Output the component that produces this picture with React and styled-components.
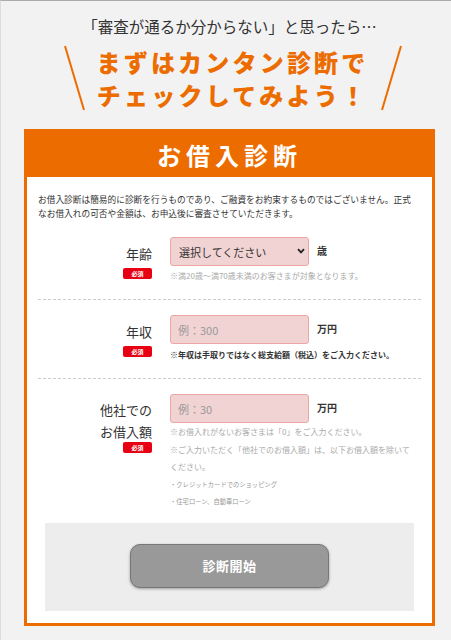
import React from "react";
import styled, { createGlobalStyle } from "styled-components";

const Global = createGlobalStyle`
  html, body { margin: 0; padding: 0; }
  body {
    background: #f2f2f2;
    font-family: "Noto Sans CJK JP", "Noto Sans", sans-serif;
    color: #333;
  }
  * { box-sizing: border-box; }
`;

const Page = styled.div`
  min-height: 640px;
  border-top: 1px solid #aaa;
  border-left: 1px solid #ddd;
  padding: 0 16px 14px 23px;
`;

const Hero = styled.div`
  display: flex;
  flex-direction: column;
  align-items: center;
  padding-top: 14px;
  height: 128px;
`;

const Lead = styled.div`
  font-size: 15.5px;
  line-height: 22px;
  color: #333;
`;

const CatchRow = styled.div`
  display: flex;
  align-items: center;
  justify-content: center;
  gap: 11px;
  margin-top: 8px;
  padding-left: 6px;
`;

const Slash = styled.svg`
  width: 24px;
  height: 66px;
  flex: none;
`;

const Catch = styled.div`
  font-size: 24px;
  line-height: 33px;
  font-weight: 900;
  color: #ec6c00;
  text-align: center;
  letter-spacing: 3.2px;
`;

const Card = styled.section`
  border: 3px solid #ec6c00;
  background: #fff;
`;

const CardHead = styled.h2`
  margin: 0;
  background: #ec6c00;
  color: #fff;
  height: 45px;
  display: flex;
  align-items: center;
  justify-content: center;
  font-size: 24px;
  font-weight: 700;
  letter-spacing: 5px;
`;

const CardBody = styled.div`
  padding: 16px 11px 12px 11px;
`;

const Intro = styled.p`
  margin: 0 0 1px;
  padding-right: 6px;
  font-size: 8.7px;
  line-height: 14px;
  color: #333;
`;

const Row = styled.div`
  display: grid;
  grid-template-columns: 114px 1fr;
  column-gap: 18px;
  padding: 15px 0 ${(p) => p.$pb || 16}px;
  border-bottom: ${(p) => (p.$last ? "none" : "1px dashed #ccc")};
`;

const LabelCol = styled.div`
  display: flex;
  flex-direction: column;
  align-items: flex-end;
  padding-top: ${(p) => p.$pt || 6}px;
`;

const Label = styled.div`
  font-size: 13px;
  line-height: 22px;
  text-align: right;
  color: #333;
`;

const Badge = styled.span`
  display: inline-flex;
  align-items: center;
  justify-content: center;
  width: 29px;
  height: 11px;
  border-radius: 2px;
  background: #e60012;
  color: #fff;
  font-size: 6px;
  font-weight: 700;
  margin-top: ${(p) => p.$mt ?? 4}px;
`;

const FieldCol = styled.div`
  display: flex;
  flex-direction: column;
`;

const FieldLine = styled.div`
  display: flex;
  align-items: center;
  gap: 8px;
`;

const SelectWrap = styled.div`
  position: relative;
  width: 139px;
  height: 29px;
`;

const Select = styled.select`
  appearance: none;
  width: 100%;
  height: 100%;
  background: #f2d3d3;
  border: 1px solid #f0a5a5;
  border-radius: 3px;
  font-family: inherit;
  font-size: 11px;
  color: #333;
  padding: 0 20px 0 8px;
  outline: none;
`;

const Chevron = styled.svg`
  position: absolute;
  right: 4px;
  top: 11px;
  width: 8px;
  height: 6px;
  pointer-events: none;
`;

const Input = styled.input`
  width: 139px;
  height: 29px;
  background: #f2d3d3;
  border: 1px solid #f0a5a5;
  border-radius: 3px;
  font-family: inherit;
  font-size: 11px;
  color: #333;
  padding: 0 7px;
  outline: none;
  &::placeholder { color: #999; }
`;

const Unit = styled.span`
  font-size: 10px;
  font-weight: 700;
  line-height: 20px;
  color: #333;
  margin-top: -1px;
`;

const Note = styled.p`
  margin: 0;
  font-size: 8px;
  line-height: ${(p) => p.$lh || 17.5}px;
  color: ${(p) => (p.$strong ? "#333" : "#aaa")};
  font-weight: ${(p) => (p.$strong ? 700 : 400)};
  margin-top: ${(p) => p.$mt || 0}px;
  padding-right: 6px;
`;

const Bullet = styled.p`
  margin: 0;
  font-size: 6.3px;
  line-height: 17px;
  color: #999;
`;

const ActionBox = styled.div`
  background: #ededed;
  margin: 0 7px;
  padding: 21px 0 23px;
  display: flex;
  justify-content: center;
`;

const Submit = styled.button`
  width: 199px;
  height: 44px;
  border-radius: 10px;
  background: #999;
  border: 1px solid #777;
  box-shadow: 0 1px 3px rgba(0, 0, 0, 0.35);
  color: #fff;
  font-family: inherit;
  font-size: 13px;
  font-weight: 700;
  letter-spacing: 0.5px;
`;

export default function App() {
  return (
    <>
      <Global />
      <Page>
        <Hero>
          <Lead>「審査が通るか分からない」と思ったら…</Lead>
          <CatchRow>
            <Slash viewBox="0 0 24 66">
              <line x1="3" y1="1" x2="22" y2="65" stroke="#ec6c00" strokeWidth="2" />
            </Slash>
            <Catch>
              まずはカンタン診断で
              <br />
              チェックしてみよう！
            </Catch>
            <Slash viewBox="0 0 24 66">
              <line x1="21" y1="1" x2="2" y2="65" stroke="#ec6c00" strokeWidth="2" />
            </Slash>
          </CatchRow>
        </Hero>
        <Card>
          <CardHead>お借入診断</CardHead>
          <CardBody>
            <Intro>
              お借入診断は簡易的に診断を行うものであり、ご融資をお約束するものではございません。正式なお借入れの可否や金額は、お申込後に審査させていただきます。
            </Intro>
            <Row>
              <LabelCol>
                <Label>年齢</Label>
                <Badge $mt={3}>必須</Badge>
              </LabelCol>
              <FieldCol>
                <FieldLine>
                  <SelectWrap>
                    <Select defaultValue="">
                      <option value="">選択してください</option>
                    </Select>
                    <Chevron viewBox="0 0 8 6">
                      <path d="M1 1.2 L4 4.4 L7 1.2" fill="none" stroke="#222" strokeWidth="1.8" />
                    </Chevron>
                  </SelectWrap>
                  <Unit>歳</Unit>
                </FieldLine>
                <Note $lh={14} $mt={3}>※満20歳～満70歳未満のお客さまが対象となります。</Note>
              </FieldCol>
            </Row>
            <Row>
              <LabelCol>
                <Label>年収</Label>
                <Badge $mt={3}>必須</Badge>
              </LabelCol>
              <FieldCol>
                <FieldLine>
                  <Input placeholder="例：300" />
                  <Unit>万円</Unit>
                </FieldLine>
                <Note $strong $lh={14} $mt={4}>※年収は手取りではなく総支給額（税込）をご入力ください。</Note>
              </FieldCol>
            </Row>
            <Row $last $pb={13}>
              <LabelCol $pt={5}>
                <Label>
                  他社での
                  <br />
                  お借入額
                </Label>
                <Badge $mt={-1}>必須</Badge>
              </LabelCol>
              <FieldCol>
                <FieldLine>
                  <Input placeholder="例：30" />
                  <Unit>万円</Unit>
                </FieldLine>
                <div>
                  <Note>※お借入れがないお客さまは「0」をご入力ください。</Note>
                  <Note>※ご入力いただく「他社でのお借入額」は、以下お借入額を除いてください。</Note>
                  <Bullet>・クレジットカードでのショッピング</Bullet>
                  <Bullet>・住宅ローン、自動車ローン</Bullet>
                </div>
              </FieldCol>
            </Row>
            <ActionBox>
              <Submit type="button">診断開始</Submit>
            </ActionBox>
          </CardBody>
        </Card>
      </Page>
    </>
  );
}
